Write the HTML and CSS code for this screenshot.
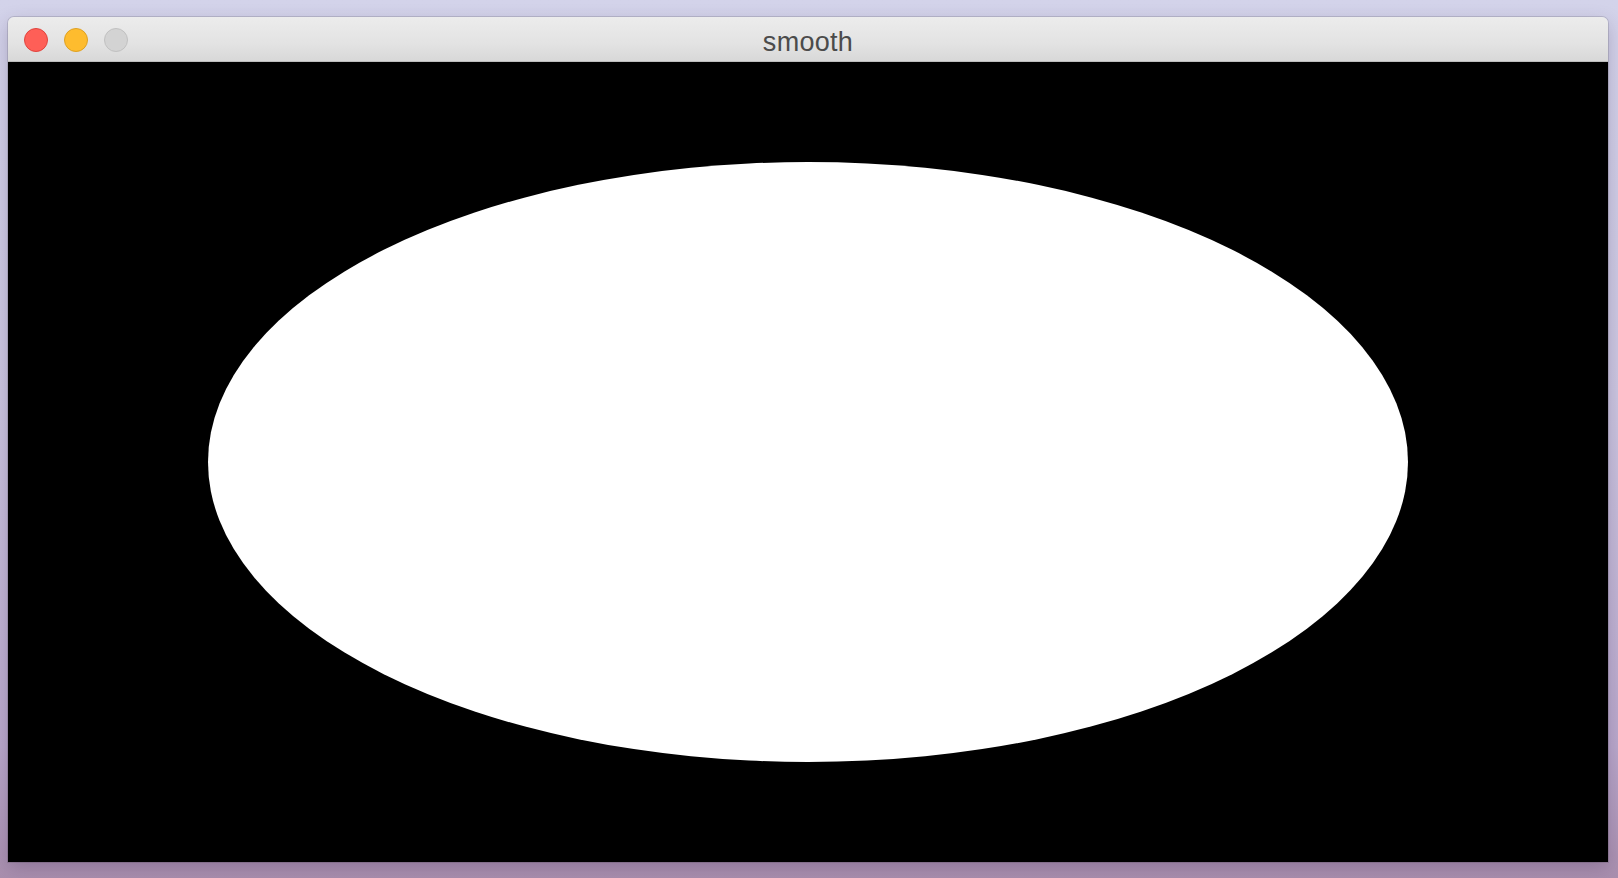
FILE: index.html
```html
<!DOCTYPE html>
<html>
<head>
<meta charset="utf-8">
<link rel="stylesheet" href="styles.css">
</head>
<body>
<div class="desktop">
  <div class="window">
    <div class="titlebar">
      <div class="lights">
        <span class="light close"></span>
        <span class="light min"></span>
        <span class="light max"></span>
      </div>
      <div class="title">smooth</div>
    </div>
    <div class="canvas">
      <div class="ellipse"></div>
    </div>
  </div>
</div>
</body>
</html>
```
FILE: styles.css
```css
html, body {
  margin: 0;
  padding: 0;
  width: 1618px;
  height: 878px;
  overflow: hidden;
}
.desktop {
  width: 1618px;
  height: 878px;
  box-sizing: border-box;
  padding: 17px 10px 0 8px;
  background: linear-gradient(180deg, #d3d3ea 0%, #cbc6e0 45%, #b9a8cb 85%, #a98fae 100%);
}
.window {
  width: 1600px;
  display: flex;
  flex-direction: column;
  border-radius: 6px 6px 0 0;
  overflow: hidden;
  box-shadow: 0 0 0 1px rgba(0,0,0,0.12), 0 6px 18px rgba(60,40,80,0.25);
}
.titlebar {
  height: 45px;
  position: relative;
  display: flex;
  align-items: center;
  justify-content: center;
  background: linear-gradient(180deg, #ececec 0%, #e3e3e3 60%, #d8d8d8 100%);
  border-bottom: 1px solid #bdbdbd;
  box-sizing: border-box;
}
.lights {
  position: absolute;
  left: 16px;
  top: 11px;
  display: flex;
  gap: 16px;
}
.light {
  width: 24px;
  height: 24px;
  border-radius: 50%;
  box-sizing: border-box;
}
.close { background: #fe5f57; border: 1px solid #e0443e; }
.min { background: #febc2e; border: 1px solid #dea123; }
.max { background: #d3d3d3; border: 1px solid #c1c1c1; }
.title {
  font-family: "Helvetica Neue", "Liberation Sans", Arial, sans-serif;
  font-size: 27px;
  color: #4b4b4b;
  letter-spacing: 0.3px;
  line-height: 1;
  padding-top: 6px;
}
.canvas {
  height: 800px;
  background: #000;
  display: flex;
  align-items: center;
  justify-content: center;
}
.ellipse {
  width: 1200px;
  height: 600px;
  border-radius: 50%;
  background: #fff;
}
```
